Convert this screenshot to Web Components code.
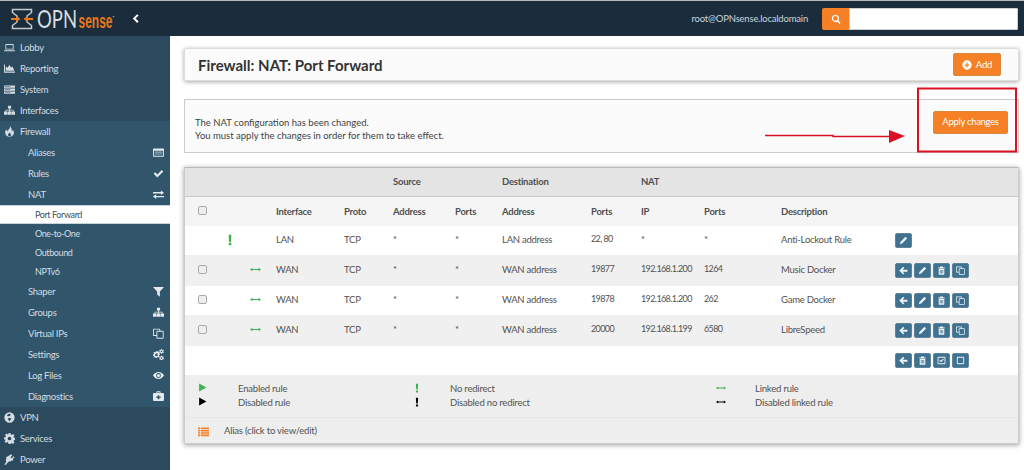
<!DOCTYPE html>
<html lang="en"><head><meta charset="utf-8"><title>OPNsense</title>
<style>
html,body{margin:0;height:470px;overflow:hidden;background:#fff}
body{font:10px/1.2 Lato,"Noto Sans",sans-serif;color:#4a4a4a}
.n{font-size:9px;letter-spacing:-.6px}
op-row op-icon{margin-bottom:2px}
</style></head><body>
<op-app>
  <op-topbar slot="top" user="root@OPNsense.localdomain"></op-topbar>
  <op-sidebar slot="side">
    <op-nav icon="laptop">Lobby</op-nav>
    <op-nav icon="chart">Reporting</op-nav>
    <op-nav icon="server">System</op-nav>
    <op-nav icon="sitemap">Interfaces</op-nav>
    <op-nav icon="fire" section>Firewall</op-nav>
    <op-nav level="1" end="listalt">Aliases</op-nav>
    <op-nav level="1" end="check">Rules</op-nav>
    <op-nav level="1" end="exchange">NAT</op-nav>
    <op-nav level="2" active>Port Forward</op-nav>
    <op-nav level="2">One-to-One</op-nav>
    <op-nav level="2">Outbound</op-nav>
    <op-nav level="2">NPTv6</op-nav>
    <op-nav level="1" end="filter">Shaper</op-nav>
    <op-nav level="1" end="sitemap">Groups</op-nav>
    <op-nav level="1" end="copy">Virtual IPs</op-nav>
    <op-nav level="1" end="cogs">Settings</op-nav>
    <op-nav level="1" end="eye">Log Files</op-nav>
    <op-nav level="1" end="medkit">Diagnostics</op-nav>
    <op-nav icon="globe">VPN</op-nav>
    <op-nav icon="cog">Services</op-nav>
    <op-nav icon="plug">Power</op-nav>
  </op-sidebar>
  <op-title-card>Firewall: NAT: Port Forward</op-title-card>
  <op-alert>
    <span>The NAT configuration has been changed.</span>
    <span>You must apply the changes in order for them to take effect.</span>
  </op-alert>
  <op-nat-table>
    <op-row kind="head1"><i></i><i></i><i></i><i></i><i></i><b>Source</b><i></i><b>Destination</b><i></i><b>NAT</b></op-row>
    <op-row kind="head2"><op-check></op-check><i></i><i></i><b>Interface</b><b>Proto</b><b>Address</b><b>Ports</b><b>Address</b><b>Ports</b><b>IP</b><b>Ports</b><b>Description</b></op-row>
    <op-row><i></i><op-icon name="excl" style="color:#3eb34f;width:12px;height:12px;margin-left:-2px"></op-icon><i></i><span>LAN</span><span>TCP</span><span>*</span><span>*</span><span>LAN address</span><span class="n">22, 80</span><span>*</span><span>*</span><span>Anti-Lockout Rule</span><op-actions set="pencil"></op-actions></op-row>
    <op-row kind="alt"><op-check></op-check><i></i><op-icon name="longh" style="color:#3eb34f;width:11px;height:11px"></op-icon><span>WAN</span><span>TCP</span><span>*</span><span>*</span><span>WAN address</span><span class="n">19877</span><span class="n">192.168.1.200</span><span class="n">1264</span><span>Music Docker</span><op-actions set="back pencil trash copy"></op-actions></op-row>
    <op-row><op-check></op-check><i></i><op-icon name="longh" style="color:#3eb34f;width:11px;height:11px"></op-icon><span>WAN</span><span>TCP</span><span>*</span><span>*</span><span>WAN address</span><span class="n">19878</span><span class="n">192.168.1.200</span><span class="n">262</span><span>Game Docker</span><op-actions set="back pencil trash copy"></op-actions></op-row>
    <op-row kind="alt"><op-check></op-check><i></i><op-icon name="longh" style="color:#3eb34f;width:11px;height:11px"></op-icon><span>WAN</span><span>TCP</span><span>*</span><span>*</span><span>WAN address</span><span class="n">20000</span><span class="n">192.168.1.199</span><span class="n">6580</span><span>LibreSpeed</span><op-actions set="back pencil trash copy"></op-actions></op-row>
    <op-row><i></i><i></i><i></i><i></i><i></i><i></i><i></i><i></i><i></i><i></i><i></i><i></i><op-actions set="back trash checksq square"></op-actions></op-row>
    <op-legend></op-legend>
  </op-nat-table>
  <op-annotation></op-annotation>
</op-app>
<script>
const I={
laptop:'<path d="M3 3h10a1 1 0 0 1 1 1v7H2V4a1 1 0 0 1 1-1zm.3 1.300v5.400h9.400V4.300zM0 12h16v.6c0 .5-.5 1-1 1H1c-.5 0-1-.5-1-1z" fill-rule="evenodd"/>',
chart:'<path d="M0 2h1.400v10.400H16V14H0z"/><path d="M2.500 11.400V5l2.700 2 2.500-4 2.800 3.400L12.500 5l2.500 6.400z"/>',
server:'<path d="M0 2h16v3.400H0zM0 6.400h16v3.400H0zM0 10.800h16v3.400H0z"/><path fill="#2c4b5e" d="M1.200 3.300h8v.8h-8zM1.200 7.700h8v.8h-8zM1.200 12.100h8v.8h-8z"/>',
sitemap:'<path d="M5.700 1h4.600v4H8.600v2h5.200v2.500H16V14h-5V9.500h2V8H8.600v1.500H10.500V14h-5V9.500h2V8H3v1.500h2V14H0V9.500h2.200V7h5.200V5H5.700z"/>',
fire:'<path d="M8.500 0c.8 2.500-.6 3.800-2 5.300C5.500 6.300 5 7 5 7.800 4 7 3.700 5.800 4 4.700 2.200 6.200 1.500 8 1.700 10c.3 3 3 5.600 6.300 5.600s6.200-2.400 6.400-5.600c.1-2-.8-3.500-1.800-4.600 0 1.300-.5 2.200-1.300 2.700C11.600 5 10.800 2 8.500 0zM8 9c.4 1.500 2.400 2.200 2.400 4 0 1.200-1 2-2.400 2s-2.400-.9-2.400-2.100C5.600 11.300 7.700 10.800 8 9z" fill-rule="evenodd"/>',
listalt:'<path fill-rule="evenodd" d="M1 2h14a1 1 0 0 1 1 1v10a1 1 0 0 1-1 1H1a1 1 0 0 1-1-1V3a1 1 0 0 1 1-1zm.3 3.500v7.200h13.400V5.500z"/><path opacity=".6" d="M2.300 6.700h11.400v1.500H2.300zM2.300 9.500h11.400V11H2.300z"/>',
check:'<path d="M1 8.500 3.200 6.300 6.300 9.400 12.800 3 15 5.200 6.300 13.800z"/>',
exchange:'<path d="M0 5h11.500V2.500L16 6l-4.500 3.300V7H0zM16 10.500H4.500V8L0 11.500 4.500 15v-2.500H16z" transform="translate(0 -.5)"/>',
filter:'<path d="M0 1.500h16L10 8v7.500L6 12.500V8z"/>',
copy:'<path fill-rule="evenodd" d="M1 1h8.500a1 1 0 0 1 1 1v2H14a1.500 1.500 0 0 1 1.500 1.500v8.500A1.500 1.500 0 0 1 14 15.500H6.500A1.500 1.500 0 0 1 5 14v-2.500H1a1 1 0 0 1-1-1V2a1 1 0 0 1 1-1zm.3 1.300v7.900H5V5.500A1.500 1.500 0 0 1 6.500 4h2.700V2.300zm5 3v8.900h7.900V5.300z"/>',
cogs:'<path fill-rule="evenodd" d="M6 3.500l1 .3.900-.7 1.400 1.400-.7 1 .4 1 1.100.2v2l-1.100.2-.4 1 .7 1-1.400 1.400-.9-.7-1 .4-.2 1.100h-2l-.2-1.100-1-.4-.9.7L.8 11.900l.7-1-.4-1L0 9.700v-2l1.100-.2.400-1-.7-1L2.200 4.100l.9.7 1-.4.200-1.100h2zM5 6.600a2 2 0 1 0 0 4 2 2 0 0 0 0-4zM13 0l.3 1 .9.400 1-.4.600 1.200-.8.700v1l.8.700-.6 1.100-1-.3-.9.400-.3 1h-1.300l-.3-1-.800-.400-1 .3L9 4.600l.8-.7v-1L9 2.200 9.600 1l1 .4.800-.4.300-1zM12.400 2.200a1.200 1.200 0 1 0 0 2.400 1.200 1.200 0 0 0 0-2.400zM13 9.700l.3 1 .9.400 1-.4.600 1.200-.8.700v1l.8.700-.6 1.100-1-.3-.9.400-.3 1h-1.300l-.3-1-.800-.400-1 .3-.6-1.100.8-.7v-1l-.8-.7.600-1.200 1 .4.800-.4.300-1zM12.400 11.900a1.200 1.200 0 1 0 0 2.400 1.200 1.200 0 0 0 0-2.400z"/>',
eye:'<path fill-rule="evenodd" d="M8 3c3.500 0 6.300 2.200 8 5-1.700 2.800-4.500 5-8 5S1.700 10.800 0 8c1.700-2.800 4.500-5 8-5zm0 1.500a3.500 3.500 0 1 0 0 7 3.500 3.500 0 0 0 0-7z"/><circle cx="8" cy="8" r="2.300"/>',
medkit:'<path fill-rule="evenodd" d="M5 3V1.500A1 1 0 0 1 6 .5h4a1 1 0 0 1 1 1V3h3.500A1.500 1.500 0 0 1 16 4.500v8.500a1.500 1.500 0 0 1-1.500 1.500h-13A1.500 1.500 0 0 1 0 13V4.500A1.500 1.500 0 0 1 1.500 3zm1.300 0h3.400V1.800H6.300zM7 6v2H5v2h2v2h2v-2h2V8H9V6z"/>',
globe:'<path fill-rule="evenodd" d="M8 .5a7.500 7.500 0 1 1 0 15 7.500 7.500 0 0 1 0-15zM4 4.200 5.800 6l2.600-.3L10 3.500 7.700 2.500zm3.200 4.300-1.700 1.700L8 13.300l1.600-1.900L11 9.500z"/>',
cog:'<path fill-rule="evenodd" d="M6.500 0h3l.4 2.200 1.300.6L13.100 1.500l2.100 2.100-1.300 1.900.6 1.300 2.200.4v3l-2.200.4-.6 1.300 1.300 1.900-2.100 2.100-1.900-1.300-1.300.6L9.500 16h-3l-.4-2.200-1.300-.6-1.900 1.300-2.100-2.100 1.300-1.900-.6-1.300L0 9.500v-3l2.200-.4.600-1.300-1.300-1.900 2.100-2.100 1.900 1.300 1.300-.6zM8 5.300a2.700 2.700 0 1 0 0 5.400 2.700 2.700 0 0 0 0-5.400z"/>',
plug:'<path d="M10.500.5l1.500 1.200-2.500 3 1.800 1.400 2.500-3 1.500 1.200-2.700 3.300 1.200 1-1.100 1.300-1-.8c-1.400 1.600-3.100 2.300-4.700 1.800L4.500 13.500 3 15.800.5 15.500l2.800-4.200c-1-1.300-.9-3.100.4-4.700l-1-.8 1.100-1.300z"/>',
pencil:'<path d="M11.500 1.500 14.500 4.500 5.500 13.500 1.500 14.500 2.500 10.500z"/>',
trash:'<path fill-rule="evenodd" d="M5.500 1h5l.6 1.500H14V4H2V2.500h2.900zM3 5h10v9a1.500 1.500 0 0 1-1.500 1.500h-7A1.500 1.500 0 0 1 3 14zm2 2v6.500h1.200V7zm2.400 0v6.500h1.200V7zm2.400 0v6.500H11V7z"/>',
back:'<path d="M7.500 1.500 9.500 3.500 6.500 6.500H15v3.500H6.500l3 3-2 2L.5 8.200z"/>',
checksq:'<path fill-rule="evenodd" d="M2.500 1.500h11A1.500 1.500 0 0 1 15 3v10a1.500 1.500 0 0 1-1.500 1.500h-11A1.500 1.500 0 0 1 1 13V3a1.500 1.500 0 0 1 1.500-1.500zm.1 1.600v9.800h10.800V3.100z"/><path d="M4 8l1.500-1.500 1.800 1.800 3.400-3.400L12.200 6.400 7.300 11.300z"/>',
square:'<path fill-rule="evenodd" d="M3 1.500h10A1.500 1.500 0 0 1 14.500 3v10a1.500 1.500 0 0 1-1.500 1.500H3A1.500 1.500 0 0 1 1.500 13V3A1.500 1.500 0 0 1 3 1.500zm.1 1.600v9.800h9.800V3.100z"/>',
plus:'<path fill-rule="evenodd" d="M8 .5a7.500 7.500 0 1 1 0 15 7.500 7.500 0 0 1 0-15zM7 4v3H4v2h3v3h2V9h3V7H9V4z"/>',
search:'<path fill-rule="evenodd" d="M7 1a6 6 0 0 1 4.800 9.600l3.500 3.500-1.700 1.700-3.500-3.500A6 6 0 1 1 7 1zm0 2.300a3.700 3.700 0 1 0 0 7.400 3.700 3.700 0 0 0 0-7.400z"/>',
chev:'<path d="M11.500 1 13.800 3.300 8.900 8l4.900 4.700L11.500 15 4.500 8z"/>',
play:'<path d="M2 1l13 7-13 7z"/>',
excl:'<path d="M6.200 1h3.600l-.5 9.500H6.700zM6.300 11.800h3.400V15H6.300z"/>',
longh:'<path d="M3.500 5.500v1.800h9V5.500L16 8l-3.500 2.500V8.700h-9v1.800L0 8z"/>',
list:'<path d="M0 2h3v2.400H0zM4 2h12v2.400H4zM0 5.500h3v2.400H0zM4 5.500h12v2.400H4zM0 9h3v2.400H0zM4 9h12v2.400H4zM0 12.500h3v2.400H0zM4 12.500h12v2.400H4z"/>'
};
function def(name,css,html,extra){
  const t=document.createElement('template');
  t.innerHTML='<style>'+css+'</style>'+html;
  customElements.define(name,class extends HTMLElement{
    constructor(){super();this.attachShadow({mode:'open'}).appendChild(t.content.cloneNode(true));}
    connectedCallback(){extra&&extra.call(this,this.shadowRoot);}
  });
}
const ico=(n,s)=>`<op-icon name="${n}"${s?` style="${s}"`:''}></op-icon>`;
customElements.define('op-icon',class extends HTMLElement{
  constructor(){super();this.attachShadow({mode:'open'});}
  connectedCallback(){this.shadowRoot.innerHTML=`<style>:host{display:inline-block;width:10px;height:10px;line-height:0;flex:none}svg{width:100%;height:100%;fill:currentColor;display:block}</style><svg viewBox="0 0 16 16">${I[this.getAttribute('name')]||''}</svg>`;}
});
def('op-app',`:host{display:grid;grid-template:36px 434px/170px 854px;width:1024px;height:470px;overflow:hidden}
::slotted([slot=top]){grid-column:1/3}
.main{position:relative;padding:12px 5px 0 14px;display:flex;flex-direction:column;min-width:0}`,
`<slot name="top"></slot><slot name="side"></slot><div class="main"><slot></slot></div>`);
def('op-topbar',`:host{display:flex;align-items:center;background:#1b2d3d;border-top:1px solid #b9b9b9;box-sizing:border-box;height:36px;color:#c9d4dc}
.logo{margin-left:11px;width:110px;height:24px;flex:none}
.chev{margin-left:9px;width:10px;height:11px;color:#fff}
.user{margin-left:auto;margin-right:14px;font-size:9.500px;letter-spacing:-.2px}
.s{display:flex;margin-right:6px;height:22px;border-radius:2px;overflow:hidden}
.sb{width:27px;background:#f58025;display:flex;align-items:center;justify-content:center;color:#fff}
.si{width:169px;background:#fff;border:1px solid #c8d0d6;box-sizing:border-box}`,
`<svg class="logo" viewBox="0 0 110 24" style="overflow:visible">
<path d="M1.500 2.500H20.500V5.500L16 9V15L20.500 18.500V21.500H1.500V18.500L6 15V9L1.500 5.500Z" fill="none" stroke="#c3c9cd" stroke-width="1.500"/>
<path d="M0 11h5.500V9L9.500 12 5.500 15V13H0zM22 11h-5.500V9L12.500 12 16.500 15V13H22z" fill="#ea7a1e"/>
<text transform="translate(26 21) scale(.74 1)" fill="#d9dee2" font-family="Lato" font-weight="400" font-size="25">OPN</text>
<text transform="translate(67.500 21) scale(.6 1)" fill="#e8761a" font-family="Liberation Sans" font-weight="700" font-size="20">sense</text>
<circle cx="102.500" cy="9.500" r=".8" fill="#9aa5ad"/>
</svg><span class="chev">${ico('chev','width:100%;height:100%')}</span>
<span class="user"><span id="u"></span></span>
<div class="s"><div class="sb">${ico('search','width:10px;height:10px')}</div><div class="si"></div></div>`,
function(r){r.getElementById('u').textContent=this.getAttribute('user');});
def('op-sidebar',`:host{display:block;background:#2b4a5d;height:434px;overflow:hidden;color:#d3dde3;width:170px;padding-top:1px;box-sizing:border-box}`,`<slot></slot>`);
def('op-nav',`:host{display:flex;align-items:center;height:21px;padding-left:4px;padding-right:6px;font-size:9.500px;letter-spacing:-.3px;box-sizing:border-box}
:host([section]),:host([level]){background:#31566c}
:host([level="1"]){padding-left:28px}
:host([level="2"]){padding-left:35px;padding-top:1px;height:19px;font-size:9px;letter-spacing:-.4px}
:host([active]){background:#fff;color:#3d4f5c;border-top:1px solid #c9d4da;border-bottom:1px solid #c9d4da}
.i{width:11px;height:11px;margin-right:5px;display:flex}
.e{margin-left:auto;width:11px;height:11px;color:#e3e9ed}`,
`<span class="i" id="i"></span><slot></slot><span class="e" id="e"></span>`,
function(r){const a=this.getAttribute('icon'),b=this.getAttribute('end');
 const i=r.getElementById('i'),e=r.getElementById('e');
 if(a){i.innerHTML=ico(a,'width:100%;height:100%');}else i.remove();
 if(b){e.innerHTML=ico(b,'width:100%;height:100%');}else e.remove();});
def('op-btn',`:host{display:inline-flex;align-items:center;justify-content:center;gap:4px;height:23px;background:#f58025;border:1px solid #d8883f;border-radius:2px;color:#fff;box-sizing:border-box;font-size:9.500px;letter-spacing:-.2px}`,`<slot></slot>`);
def('op-title-card',`:host{display:flex;align-items:center;height:33px;box-sizing:border-box;background:#fbfbfb;border:1px solid #ddd;border-radius:2px;box-shadow:0 1px 4px rgba(0,0,0,.35);padding:0 17px 0 13px;margin-bottom:18px;flex:none}
h1{margin:0;font-size:15px;font-weight:700;color:#333;flex:1}
op-btn{width:48px}`,
`<h1><slot></slot></h1><op-btn>${ico('plus','width:10px;height:10px')}Add</op-btn>`);
def('op-alert',`:host{display:flex;align-items:center;height:54px;box-sizing:border-box;background:#fbfbfb;border:1px solid #ccc;padding:0 10px 0 10px;margin-bottom:14px;flex:none}
.t{flex:1;display:flex;flex-direction:column;gap:2px;padding-top:5px;color:#3f3f3f}
::slotted(span){display:block;font-size:9.500px;line-height:11px}
op-btn{width:75px;margin-top:-8px;letter-spacing:-.3px}`,
`<div class="t"><slot></slot></div><op-btn>Apply changes</op-btn>`);
def('op-nat-table',`:host{display:block;border:1px solid #ccc;border-top-color:#bbb;box-shadow:0 1px 5px rgba(0,0,0,.4);height:277px;box-sizing:border-box;background:#eee;flex:none;--cols:28px 24px 26px 68px 49px 62px 47px 89px 50px 63px 77px 114px 1fr}`,`<slot></slot>`);
def('op-row',`:host{display:grid;grid-template-columns:var(--cols);align-items:center;height:30px;padding-left:13px;background:#fff;color:#525252;font-size:9.500px;box-sizing:border-box;border-bottom:1px solid #f0f0f0;letter-spacing:-.25px;white-space:nowrap}
:host([kind=alt]){background:#f0f0f0}
:host([kind=head1]){background:#e4e4e4;height:29px;border-bottom:1px solid #c8c8c8}
:host([kind=head2]){background:#f5f5f5;height:29px;border-bottom:0}
::slotted(b){font-weight:700;color:#505050}
::slotted(span){margin-bottom:2px}`,`<slot></slot>`);
def('op-check',`:host{display:block;width:9px;height:9px;background:#eee;border:1px solid #aaa;border-radius:2px;box-sizing:border-box;margin-bottom:2px}`,``);
def('op-actions',`:host{display:flex;gap:2px}
.b{width:17px;height:15px;background:#3f7190;border:1px solid #608399;border-radius:2px;box-sizing:border-box;display:flex;align-items:center;justify-content:center;color:#eef3f6}`,`<span id="x" style="display:contents"></span>`,
function(r){r.getElementById('x').innerHTML=this.getAttribute('set').split(' ').map(n=>`<span class="b">${ico(n,'width:9px;height:9px')}</span>`).join('');});
def('op-legend',`:host{display:block;background:#eee;color:#525252;font-size:9.500px;letter-spacing:-.2px}
.g{display:grid;grid-template-columns:40px 174px 38px 266px 39px 1fr;grid-auto-rows:14px;align-items:center;padding:6px 0 7px 13px;border-bottom:1px solid #e8e8e8}
.a{display:flex;align-items:center;gap:15px;padding:7px 0 0 13px}
.k{color:#000}.gr{color:#3eb34f}
span{line-height:12px}`,
`<div class="g"><span class="gr">${ico('play','width:9px;height:9px')}</span><span>Enabled rule</span><span class="gr">${ico('excl','width:10px;height:10px')}</span><span>No redirect</span><span class="gr">${ico('longh','width:10px;height:10px')}</span><span>Linked rule</span>
<span class="k">${ico('play','width:9px;height:9px')}</span><span>Disabled rule</span><span class="k">${ico('excl','width:10px;height:10px')}</span><span>Disabled no redirect</span><span class="k">${ico('longh','width:10px;height:10px')}</span><span>Disabled linked rule</span></div>
<div class="a"><span style="color:#f58025;display:flex">${ico('list','width:11px;height:11px')}</span><span>Alias (click to view/edit)</span></div>`);
def('op-annotation',`:host{position:absolute;left:0;top:0;width:854px;height:200px;pointer-events:none}
svg{position:absolute;left:0;top:0}`,
`<svg width="854" height="200" viewBox="0 0 854 200"><rect x="748" y="52.500" width="98" height="63" fill="none" stroke="#dc1024" stroke-width="2"/><path d="M595 99.500 H663 V100.500 H720" stroke="#dc1024" stroke-width="1.500" fill="none"/><path d="M719 94 L735 100 L719 107z" fill="#dc1024"/></svg>`);
</script>
</body></html>
